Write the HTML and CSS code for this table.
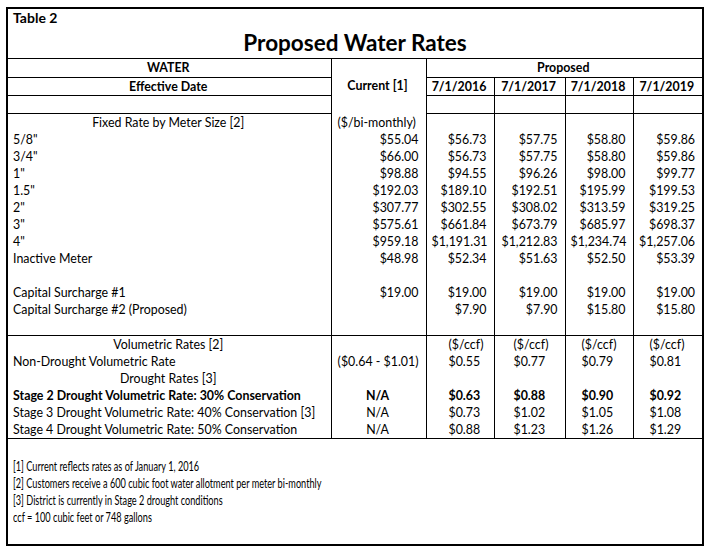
FILE: index.html
```html
<!DOCTYPE html>
<html>
<head>
<meta charset="utf-8">
<link rel="stylesheet" href="styles.css">
</head>
<body>
<table class="rates">
  <colgroup>
    <col class="c-label"><col class="c-cur"><col class="c-y1"><col class="c-y2"><col class="c-y3"><col class="c-y4">
  </colgroup>
  <tbody class="head">
    <tr class="r-table"><td colspan="6" class="table-no">Table 2</td></tr>
    <tr class="r-title"><td colspan="6" class="title">Proposed Water Rates</td></tr>
    <tr class="r-h1">
      <th class="bb">WATER</th>
      <th rowspan="3" class="cur-h">Current [1]</th>
      <th colspan="4" class="bb">Proposed</th>
    </tr>
    <tr class="r-h2">
      <th class="bb">Effective Date</th>
      <th class="bb">7/1/2016</th><th class="bb">7/1/2017</th><th class="bb">7/1/2018</th><th class="bb">7/1/2019</th>
    </tr>
    <tr class="r-h3"><td></td><td></td><td></td><td></td><td></td></tr>
  </tbody>
  <tbody class="sec fixed">
    <tr><td class="ctr">Fixed Rate by Meter Size [2]</td><td class="lft">($/bi-monthly)</td><td></td><td></td><td></td><td></td></tr>
    <tr><td>5/8"</td><td>$55.04</td><td>$56.73</td><td>$57.75</td><td>$58.80</td><td>$59.86</td></tr>
    <tr><td>3/4"</td><td>$66.00</td><td>$56.73</td><td>$57.75</td><td>$58.80</td><td>$59.86</td></tr>
    <tr><td>1"</td><td>$98.88</td><td>$94.55</td><td>$96.26</td><td>$98.00</td><td>$99.77</td></tr>
    <tr><td>1.5"</td><td>$192.03</td><td>$189.10</td><td>$192.51</td><td>$195.99</td><td>$199.53</td></tr>
    <tr><td>2"</td><td>$307.77</td><td>$302.55</td><td>$308.02</td><td>$313.59</td><td>$319.25</td></tr>
    <tr><td>3"</td><td>$575.61</td><td>$661.84</td><td>$673.79</td><td>$685.97</td><td>$698.37</td></tr>
    <tr><td>4"</td><td>$959.18</td><td>$1,191.31</td><td>$1,212.83</td><td>$1,234.74</td><td>$1,257.06</td></tr>
    <tr><td>Inactive Meter</td><td>$48.98</td><td>$52.34</td><td>$51.63</td><td>$52.50</td><td>$53.39</td></tr>
    <tr><td></td><td></td><td></td><td></td><td></td><td></td></tr>
    <tr><td>Capital Surcharge #1</td><td>$19.00</td><td>$19.00</td><td>$19.00</td><td>$19.00</td><td>$19.00</td></tr>
    <tr><td>Capital Surcharge #2 (Proposed)</td><td></td><td>$7.90</td><td>$7.90</td><td>$15.80</td><td>$15.80</td></tr>
    <tr class="last"><td></td><td></td><td></td><td></td><td></td><td></td></tr>
  </tbody>
  <tbody class="sec vol">
    <tr><td class="ctr">Volumetric Rates [2]</td><td></td><td>($/ccf)</td><td>($/ccf)</td><td>($/ccf)</td><td>($/ccf)</td></tr>
    <tr><td>Non-Drought Volumetric Rate</td><td>($0.64 - $1.01)</td><td>$0.55</td><td>$0.77</td><td>$0.79</td><td>$0.81</td></tr>
    <tr><td class="ctr">Drought Rates [3]</td><td></td><td></td><td></td><td></td><td></td></tr>
    <tr class="bold"><td>Stage 2 Drought Volumetric Rate: 30% Conservation</td><td class="na">N/A</td><td>$0.63</td><td>$0.88</td><td>$0.90</td><td>$0.92</td></tr>
    <tr><td>Stage 3 Drought Volumetric Rate: 40% Conservation [3]</td><td class="na">N/A</td><td>$0.73</td><td>$1.02</td><td>$1.05</td><td>$1.08</td></tr>
    <tr class="last"><td>Stage 4 Drought Volumetric Rate: 50% Conservation</td><td class="na">N/A</td><td>$0.88</td><td>$1.23</td><td>$1.26</td><td>$1.29</td></tr>
  </tbody>
  <tbody class="notes">
    <tr><td colspan="6" class="notes-cell">
      <p>[1] Current reflects rates as of January 1, 2016</p>
      <p>[2] Customers receive a 600 cubic foot water allotment per meter bi-monthly</p>
      <p>[3] District is currently in Stage 2 drought conditions</p>
      <p>ccf = 100 cubic feet or 748 gallons</p>
    </td></tr>
  </tbody>
</table>
</body>
</html>
```

FILE: styles.css
```css
html, body {
  margin: 0;
  padding: 0;
  background: #fff;
}
body {
  padding: 7px 0 0 6px;
  font-family: Lato, "Open Sans", sans-serif;
  font-size: 12.4px;
  color: #000;
}
.rates {
  border-collapse: collapse;
  table-layout: fixed;
  width: 696px;
  border: 2px solid #000;
}
.c-label { width: 324px; }
.c-cur { width: 95px; }
.c-y1 { width: 68px; }
.c-y2 { width: 71px; }
.c-y3 { width: 68px; }
.c-y4 { width: 70px; }

.rates td, .rates th {
  padding: 0 7px 0 5px;
  white-space: nowrap;
  line-height: 17px;
  height: 17px;
}
.rates .table-no {
  font-weight: 700;
  font-size: 14px;
  height: 18px;
  line-height: 18px;
  padding: 0 5px;
  vertical-align: top;
}
.rates .title {
  font-weight: 700;
  font-size: 22.5px;
  text-align: center;
  height: 31px;
  line-height: 31px;
  padding: 0;
  vertical-align: bottom;
  border-bottom: 1px solid #000;
}
.head th {
  font-weight: 700;
  text-align: center;
  border-left: 1px solid #000;
  border-right: 1px solid #000;
}
.rates .r-h1 th { height: 18px; line-height: 18px; }
.rates .r-h3 td { height: 17px; border: 1px solid #000; }
.rates .bb { border-bottom: 1px solid #000; }
.sec td {
  text-align: right;
  border-left: 1px solid #000;
  border-right: 1px solid #000;
}
.sec td:first-child { text-align: left; }
.rates .sec td.ctr { text-align: center; }
.rates .sec td.lft { text-align: left; padding-left: 6px; }
.rates .sec td.na { text-align: center; }
.sec tr.last td { border-bottom: 1px solid #000; }
.rates .vol td:nth-child(3) { text-align: left; padding-left: 22px; }
.rates .vol td:nth-child(4) { text-align: left; padding-left: 19px; }
.rates .vol td:nth-child(5) { text-align: left; padding-left: 16px; }
.rates .vol td:nth-child(6) { text-align: left; padding-left: 16px; }
.bold td { font-weight: 700; }
.rates .notes-cell {
  height: 86px;
  vertical-align: top;
  padding: 19px 5px 0;
}
.notes-cell p {
  margin: 0;
  line-height: 17px;
  transform: scaleX(0.74);
  transform-origin: left center;
}
```
